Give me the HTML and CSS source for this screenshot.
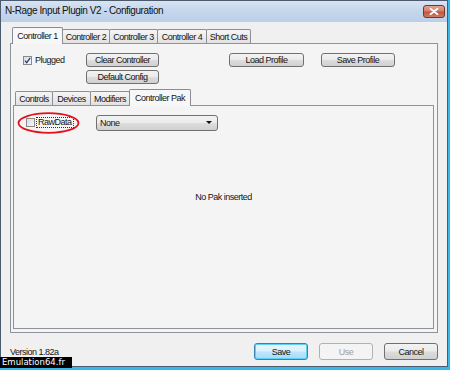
FILE: index.html
```html
<!DOCTYPE html>
<html>
<head>
<meta charset="utf-8">
<link rel="stylesheet" href="styles.css">
</head>
<body>
<div class="window">
  <div class="titlebar">
    <span class="title">N-Rage Input Plugin V2 - Configuration</span>
    <span class="close"><svg width="10" height="7" viewBox="0 0 10 7"><path d="M1.5 0.8 L8.5 6.2 M8.5 0.8 L1.5 6.2" stroke="#fff" stroke-width="1.8" stroke-linecap="round"/></svg></span>
  </div>
  <div class="client">
    <div class="tabctl outer">
      <div class="tabstrip">
        <div class="tab sel w-c1">Controller 1</div>
        <div class="tab w-c2">Controller 2</div>
        <div class="tab w-c3">Controller 3</div>
        <div class="tab w-c4">Controller 4</div>
        <div class="tab w-sc">Short Cuts</div>
      </div>
      <div class="panel outer-panel">
        <div class="top-row">
          <div class="check plugged">
            <span class="box"><svg width="9" height="9" viewBox="0 0 9 9"><path d="M2 4.6 L3.7 6.6 L7.2 1.8" fill="none" stroke="#23408c" stroke-width="1.3"/></svg></span>
            <span class="lbl">Plugged</span>
          </div>
          <div class="btn-col">
            <div class="btn w-clear">Clear Controller</div>
            <div class="btn w-clear">Default Config</div>
          </div>
          <div class="btn w-load">Load Profile</div>
          <div class="btn w-save">Save Profile</div>
        </div>
        <div class="tabctl inner">
          <div class="tabstrip">
            <div class="tab w-ctl">Controls</div>
            <div class="tab w-dev">Devices</div>
            <div class="tab w-mod">Modifiers</div>
            <div class="tab sel w-pak">Controller Pak</div>
          </div>
          <div class="panel inner-panel">
            <div class="pak-row">
              <div class="check raw">
                <span class="box"></span>
                <span class="lbl focus">RawData</span>
                <svg class="ring" width="63" height="22" viewBox="0 0 63 22"><ellipse cx="31.5" cy="11" rx="30" ry="9.8" fill="none" stroke="#e3101a" stroke-width="1.8"/></svg>
              </div>
              <div class="combo"><span>None</span><span class="arrow"></span></div>
            </div>
            <div class="nopak">No Pak inserted</div>
          </div>
        </div>
      </div>
    </div>
    <div class="footer">
      <span class="version">Version 1.82a</span>
      <div class="btn default w-foot">Save</div>
      <div class="btn disabled w-foot">Use</div>
      <div class="btn w-foot">Cancel</div>
    </div>
  </div>
</div>
<div class="badge">Emulation64.fr</div>
</body>
</html>
```

FILE: styles.css
```css
* { box-sizing: border-box; }
html, body { margin: 0; padding: 0; }
body {
  width: 450px;
  height: 370px;
  background: #35b9e6;
  font-family: "Liberation Sans", Arial, sans-serif;
  font-size: 9px;
  letter-spacing: -0.5px;
  color: #141414;
  position: relative;
  overflow: hidden;
}
.window {
  width: 448px;
  height: 367px;
  border: 1px solid #4b5a6d;
  background: #f0f0f0;
  display: flex;
  flex-direction: column;
}
.titlebar {
  height: 21px;
  flex: none;
  display: flex;
  align-items: center;
  padding: 0 2px 2px 4px;
  background: linear-gradient(#d8e4f3, #c6d7ec 45%, #bacfe9);
}
.title {
  font-size: 10px;
  letter-spacing: -0.4px;
  color: #111;
}
.close {
  margin-left: auto;
  margin-top: 2px;
  width: 22px;
  height: 13px;
  border: 1px solid #7a3326;
  border-radius: 3px;
  background: linear-gradient(#e3a494, #d2806c 45%, #c0553f 55%, #cf7a62);
  display: flex;
  align-items: center;
  justify-content: center;
}
.close svg { display: block; }
.client {
  flex: 1;
  display: flex;
  flex-direction: column;
  padding: 5px 9px 0 9px;
}
.tabctl { display: flex; flex-direction: column; }
.outer { height: 306px; flex: none; }
.tabstrip {
  display: flex;
  align-items: flex-end;
  height: 16px;
  padding-left: 2px;
  position: relative;
  z-index: 1;
}
.tab {
  height: 14px;
  border: 1px solid #8c8f97;
  border-bottom: none;
  border-radius: 2px 2px 0 0;
  background: linear-gradient(#f5f5f5, #ececec 50%, #e1e1e1);
  display: flex;
  align-items: center;
  justify-content: center;
  white-space: nowrap;
  margin-right: -1px;
}
.tab.sel {
  height: 17px;
  margin-bottom: -1px;
  background: #f7f7f7;
  border-color: #898c95;
}
.w-c1 { width: 51px; }
.w-c2 { width: 48px; }
.w-c3 { width: 49px; }
.w-c4 { width: 50px; }
.w-sc { width: 45px; }
.w-ctl { width: 38px; }
.w-dev { width: 39px; }
.w-mod { width: 40px; }
.w-pak { width: 62px; }
.panel {
  border: 1px solid #8f929a;
  background: #f4f4f4;
}
.outer-panel {
  height: 290px;
  display: flex;
  flex-direction: column;
  padding: 9px 3px 3px 2px;
}
.top-row {
  display: flex;
  align-items: flex-start;
  padding-left: 10px;
}
.check {
  display: flex;
  align-items: center;
}
.plugged { width: 63px; height: 14px; }
.box {
  width: 9px;
  height: 9px;
  border: 1px solid #8a8a8a;
  background: linear-gradient(135deg, #dcdcdc, #f7f7f7);
  display: block;
  flex: none;
}
.box svg { display: block; margin: -1px; }
.lbl { margin-left: 3px; }
.btn-col { display: flex; flex-direction: column; gap: 3px; }
.btn {
  height: 14px;
  border: 1px solid #707070;
  border-radius: 3px;
  background: linear-gradient(#f3f3f3, #ebebeb 48%, #dddddd 52%, #d0d0d0);
  display: flex;
  align-items: center;
  justify-content: center;
  white-space: nowrap;
  flex: none;
}
.w-clear { width: 73px; }
.w-load { width: 75px; margin-left: 70px; }
.w-save { width: 74px; margin-left: 17px; }
.inner { flex: 1; margin-top: 5px; }
.inner-panel {
  flex: 1;
  padding: 9px 0 0 12px;
  background: #f4f4f4;
}
.pak-row { display: flex; align-items: center; height: 15px; }
.raw { width: 70px; position: relative; }
.raw .lbl.focus {
  margin-left: 1px;
  border: 1px dotted #333;
  padding: 0 1px;
  line-height: 9px;
  height: 11px;
}
.ring {
  position: absolute;
  left: -9px;
  top: -5px;
}
.combo {
  width: 122px;
  height: 16px;
  border: 1px solid #707070;
  border-radius: 3px;
  background: linear-gradient(#f3f3f3, #ebebeb 48%, #dddddd 52%, #d0d0d0);
  display: flex;
  align-items: center;
  padding: 0 5px 0 3px;
}
.arrow {
  margin-left: auto;
  width: 0;
  height: 0;
  border-left: 3px solid transparent;
  border-right: 3px solid transparent;
  border-top: 3px solid #111;
}
.nopak {
  margin: 61px 0 0 -12px;
  text-align: center;
  line-height: 12px;
}
.footer {
  display: flex;
  align-items: center;
  height: 17px;
  margin-top: 10px;
}
.version { line-height: 12px; }
.w-foot { width: 54px; height: 17px; }
.footer .default { margin-left: auto; }
.footer .btn + .btn { margin-left: 11px; }
.btn.default {
  border-color: #3b7fb3;
  background: linear-gradient(#eaf6fd, #d9f0fc 48%, #bee6fd 52%, #a7d9f5);
  box-shadow: inset 0 0 0 1px #5ed0f5;
}
.btn.disabled {
  border-color: #adb2b5;
  background: #f4f4f4;
  color: #a0a0a0;
}
.badge {
  position: absolute;
  left: 0;
  top: 357px;
  width: 72px;
  height: 11px;
  background: #000;
  color: #fff;
  font-family: "DejaVu Sans", sans-serif;
  font-size: 8.5px;
  letter-spacing: 0;
  line-height: 11px;
  padding-left: 2px;
}
```
